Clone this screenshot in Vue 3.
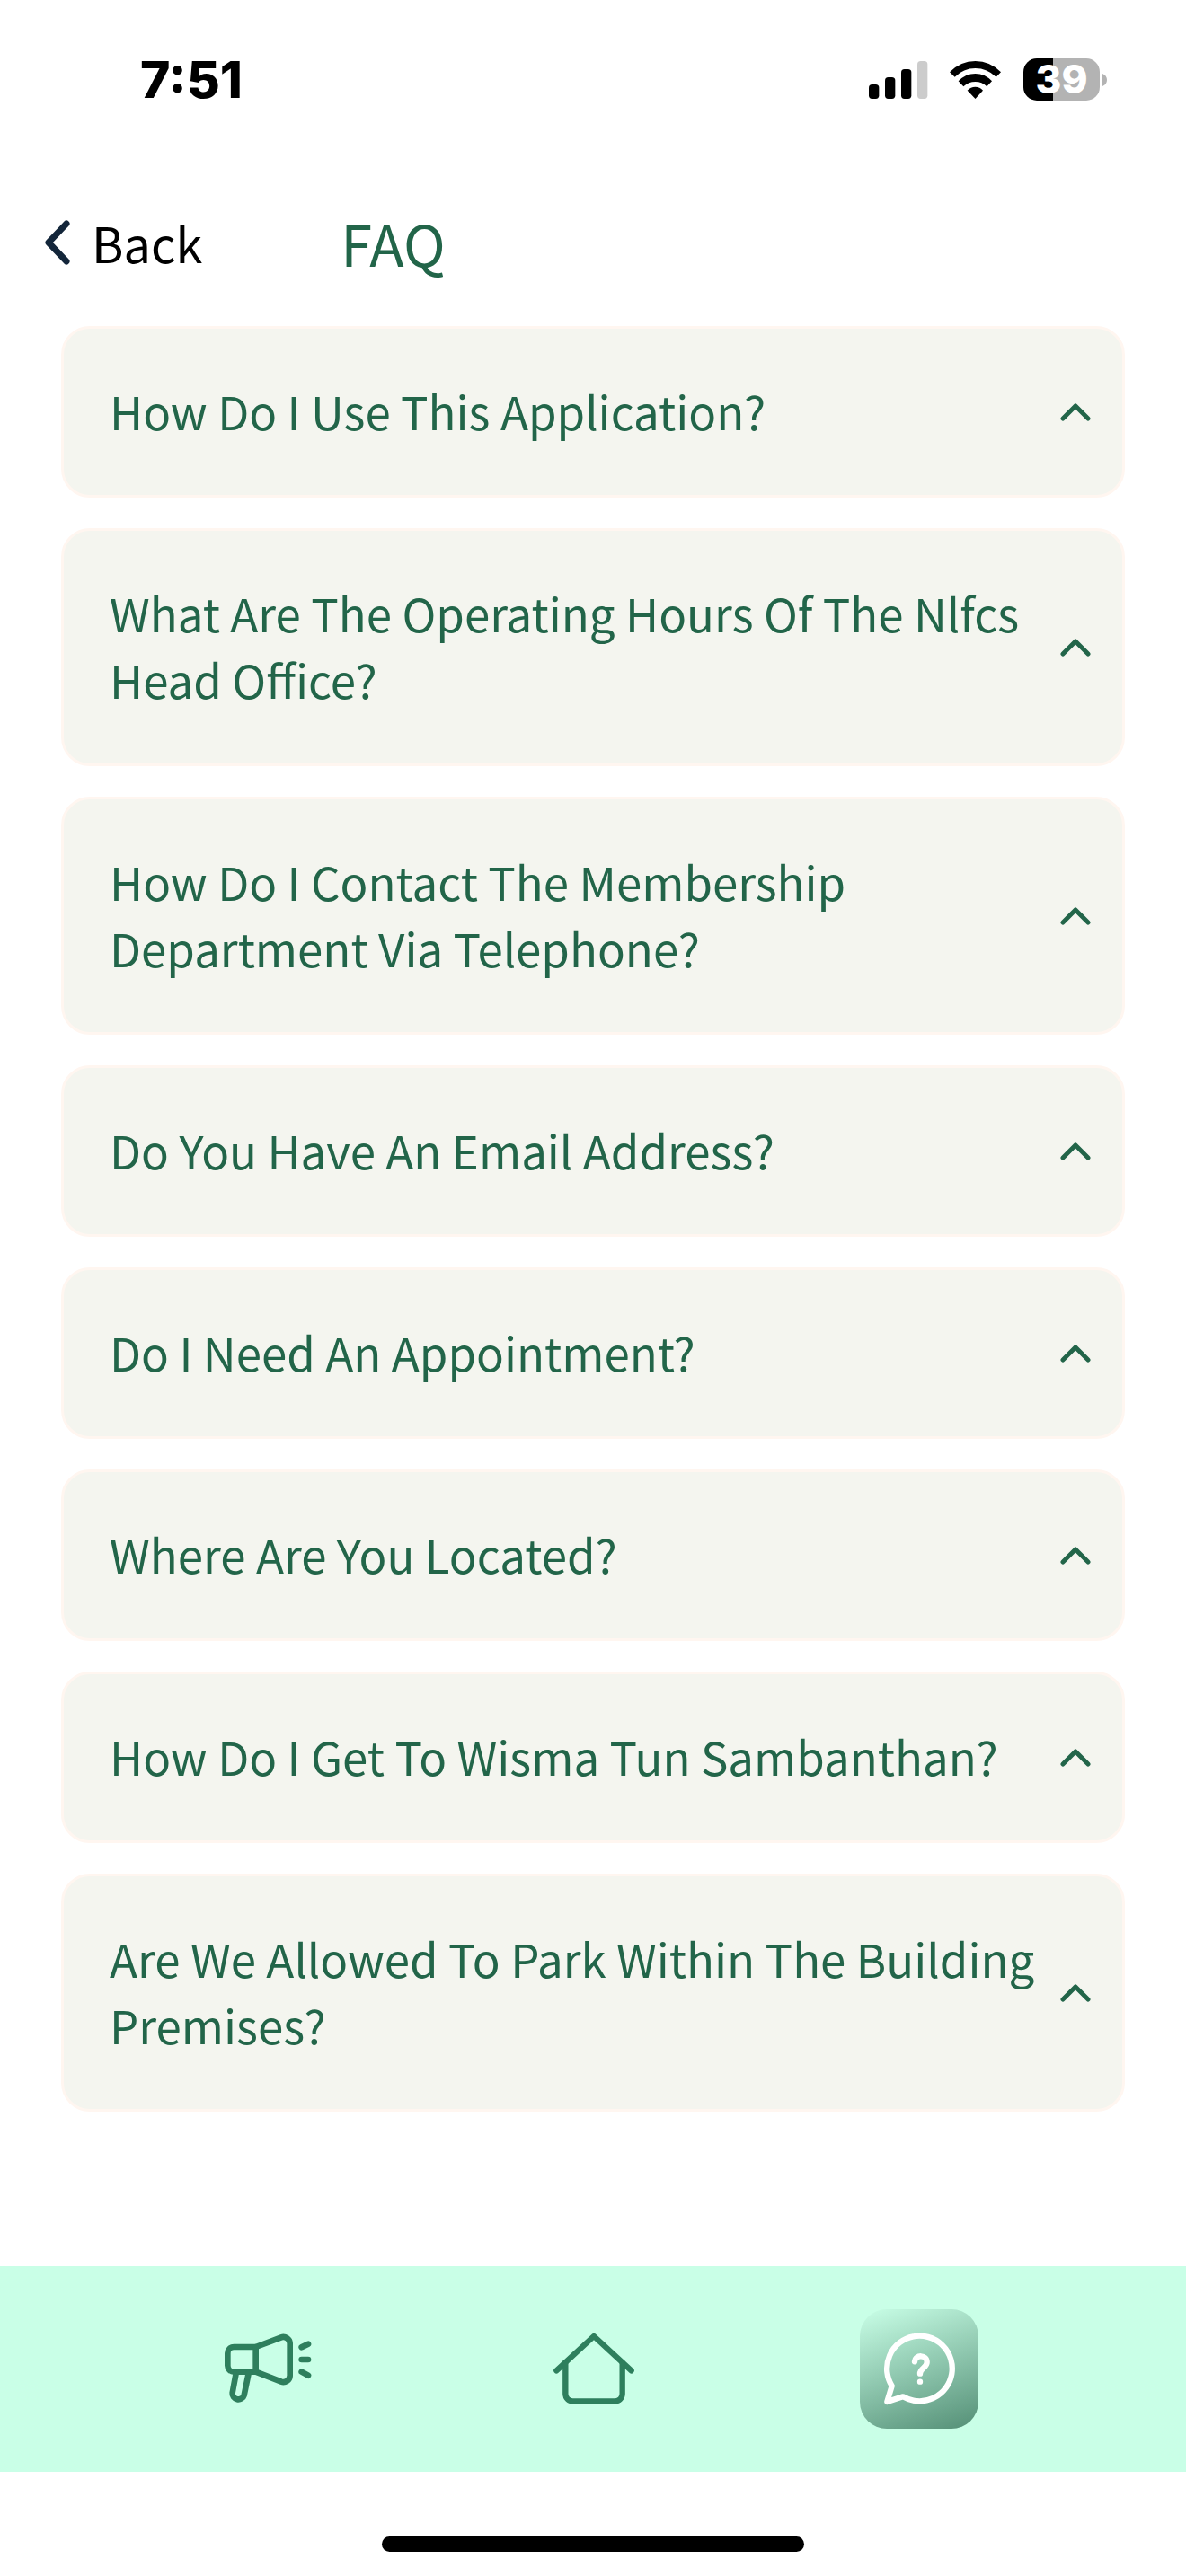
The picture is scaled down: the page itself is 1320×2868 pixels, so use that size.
<script setup>
import { ref } from 'vue'

const questions = [
  'How Do I Use This Application?',
  'What Are The Operating Hours Of The Nlfcs Head Office?',
  'How Do I Contact The Membership Department Via Telephone?',
  'Do You Have An Email Address?',
  'Do I Need An Appointment?',
  'Where Are You Located?',
  'How Do I Get To Wisma Tun Sambanthan?',
  'Are We Allowed To Park Within The Building Premises?',
]

const selected = ref(null)
</script>

<template>
  <div class="screen">
    <div class="status">
      <span class="time">7:51</span>
      <div class="indicators">
        <svg class="signal" viewBox="0 0 198 126" aria-hidden="true">
          <rect x="0" y="78" width="34" height="48" rx="11" />
          <rect x="54" y="54" width="34" height="72" rx="11" />
          <rect x="108" y="27" width="34" height="99" rx="11" />
          <rect x="162" y="0" width="34" height="126" rx="11" fill="#ccc" />
        </svg>
        <svg class="wifi" viewBox="469 110 171 126" aria-hidden="true">
          <path d="M469 147Q505 110 554.500 110T640 147L624 163Q594 134 554.500 134T486 163Z" />
          <path d="M498 177Q522 152 554.500 152T610 177L593 195Q577 179 554.500 179T515 195Z" />
          <path d="M528 208Q539 196 554.500 196T580 208L554.500 236Z" />
        </svg>
        <div class="battery">
          <span class="level">39</span>
          <svg class="nub" viewBox="0 0 15 42" aria-hidden="true">
            <path d="M0 0Q15 6 15 21T0 42Z" fill="#b3b3b3" />
          </svg>
        </div>
      </div>
    </div>

    <header class="header">
      <button class="back" type="button">
        <svg viewBox="0 0 28 50" aria-hidden="true">
          <path d="M24 4 4 25 24 46" />
        </svg>
        <span>Back</span>
      </button>
      <h1>FAQ</h1>
    </header>

    <main class="list">
      <button
        v-for="(question, i) in questions"
        :key="question"
        class="card"
        type="button"
        :aria-pressed="selected === i"
        @click="selected = selected === i ? null : i"
      >
        <span class="question">{{ question }}</span>
        <svg class="chevron" viewBox="0 0 34 20" aria-hidden="true">
          <path d="M3 17 17 3 31 17" />
        </svg>
      </button>
    </main>

    <nav class="tabs">
      <a class="tab" href="#news" aria-label="Announcements">
        <svg viewBox="140 262 300 300" stroke-width="20">
          <path d="M253 337H180a21 21 0 0 0-21 21v41a21 21 0 0 0 21 21h73Z" />
          <path d="M253 337 338 305a22 22 0 0 1 29 20v108a22 22 0 0 1-29 20L253 420" />
          <path d="M187 425 175 490a20 20 0 0 0 39 8L229 425" />
          <path d="M406 338 428 327M406 379H428M406 420 428 432" />
        </svg>
      </a>
      <a class="tab" href="#home" aria-label="Home">
        <svg viewBox="150 262 300 300" stroke-width="19">
          <path d="M178 416 303 301 428 416" />
          <path d="M208 390V494a24 24 0 0 0 24 24H374a24 24 0 0 0 24-24V390" />
        </svg>
      </a>
      <a class="tab active" href="#faq" aria-label="FAQ" aria-current="page">
        <svg viewBox="160 262 300 300" stroke-width="19">
          <path d="M219 467A109 109 0 1 1 256 503L203 520Z" />
          <path d="M295 386C297 361 336 362 336 388C336 406 313 408 313 426" />
          <path d="M313 453V453.010" />
        </svg>
      </a>
    </nav>
    <div class="home-bar"><span></span></div>
  </div>
</template>

<style>
body {
  margin: 0;
  background: #fff;
}
</style>

<style scoped>
.screen {
  display: flex;
  flex-direction: column;
  min-height: 100vh;
  background: #fff;
  color: #226549;
  font-family: "Noto Sans CJK SC", "Noto Sans CJK JP", sans-serif;
}

.status {
  display: flex;
  align-items: center;
  justify-content: space-between;
  height: 177px;
  padding: 0 88px 0 156px;
  box-sizing: border-box;
  color: #000;
  font-family: Inter, sans-serif;
}

.time {
  font-size: 57px;
  font-weight: 800;
  line-height: 68px;
}

.indicators {
  display: flex;
  align-items: center;
}

.signal {
  width: 66px;
  height: 42px;
}

.wifi {
  width: 57px;
  height: 42px;
  margin: 0 25px 0 24px;
}

.battery {
  display: flex;
  align-items: center;
  gap: 3px;
}

.level {
  width: 85px;
  border-radius: 15px;
  background: linear-gradient(90deg, #000 39%, #b3b3b3 39%);
  color: #fff;
  font-size: 44px;
  font-weight: 800;
  line-height: 47px;
  text-align: center;
}

.nub {
  width: 5px;
  height: 14px;
}

.header {
  display: flex;
  align-items: center;
  height: 186px;
  padding: 0 48px;
}

.back {
  display: flex;
  align-items: center;
  gap: 22px;
  padding: 0;
  border: 0;
  background: none;
  color: #000;
  font: inherit;
  font-size: 54px;
  line-height: 78px;
}

.back svg {
  width: 32px;
  height: 50px;
  fill: none;
  stroke: #13263a;
  stroke-width: 7;
  stroke-linecap: round;
  stroke-linejoin: round;
}

h1 {
  margin: 0 0 0 154px;
  font-size: 63px;
  font-weight: 400;
  line-height: 92px;
}

.list {
  display: flex;
  flex: 1;
  flex-direction: column;
  gap: 34px;
  padding: 0 68px 48px;
}

.card {
  display: flex;
  align-items: center;
  justify-content: space-between;
  gap: 24px;
  padding: 54px 35px 53px 51px;
  border: 3px solid #fff6f0;
  border-radius: 32px;
  background: #f4f5ef;
  color: inherit;
  font: inherit;
  font-size: 51px;
  line-height: 74px;
  text-align: left;
}

.question {
  padding-bottom: 4px;
}

.chevron {
  flex: none;
  width: 34px;
  height: 20px;
  fill: none;
  stroke: currentColor;
  stroke-width: 5;
  stroke-linecap: round;
  stroke-linejoin: round;
}

.tabs {
  display: grid;
  grid-template-columns: repeat(3, 1fr);
  justify-items: center;
  padding: 48px 115px;
  background: #c9ffe7;
}

.tab {
  display: flex;
  align-items: center;
  justify-content: center;
  width: 132px;
  height: 133px;
  border-radius: 30px;
  color: #2e7f5d;
}

.tab svg {
  width: 100px;
  height: 100px;
  fill: none;
  stroke: currentColor;
  stroke-linecap: round;
  stroke-linejoin: round;
}

.active {
  background: linear-gradient(160deg, #c9ffe7, #548f76);
  color: #fff;
}

.home-bar {
  display: flex;
  align-items: flex-end;
  justify-content: center;
  height: 116px;
  padding-bottom: 27px;
  box-sizing: border-box;
}

.home-bar span {
  width: 470px;
  height: 17px;
  border-radius: 9px;
  background: #000;
}
</style>
